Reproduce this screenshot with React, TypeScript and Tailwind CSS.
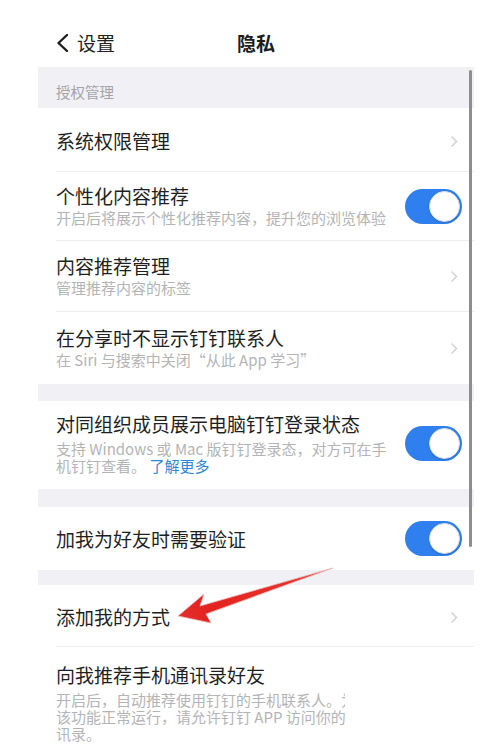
import type { ReactNode } from 'react'

const font = { fontFamily: '"Noto Sans CJK SC", "Noto Sans", sans-serif' }

function Toggle() {
  return (
    <div className="w-[57px] h-[35px] rounded-full bg-[#2f80ee] flex items-center justify-end pr-[2px] shrink-0">
      <div className="w-[31px] h-[31px] rounded-full bg-white border border-[#d6dbe3] shadow-sm" />
    </div>
  )
}

function Chevron() {
  return (
    <svg width="8" height="13" viewBox="0 0 8 13" className="shrink-0">
      <path d="M1.5 1.5 L6.5 6.5 L1.5 11.5" fill="none" stroke="#cfcfd3" strokeWidth="1.4" />
    </svg>
  )
}

interface RowProps {
  title: string
  sub?: ReactNode
  right: 'toggle' | 'chevron'
  height: string
  divider?: boolean
}

function Row({ title, sub, right, height, divider }: RowProps) {
  return (
    <div className="pl-[18px]">
      <div
        className={`flex items-center justify-between ${height} ${
          divider ? 'border-b border-[#ededef]' : ''
        } ${right === 'toggle' ? 'pr-[12px]' : 'pr-[16px]'}`}
      >
        <div className="flex flex-col">
          <div className="text-[19px] leading-[24px] text-[#1f1f1f]">{title}</div>
          {sub}
        </div>
        {right === 'toggle' ? <Toggle /> : <Chevron />}
      </div>
    </div>
  )
}

function Sub({ children }: { children: ReactNode }) {
  return <div className="text-[15px] leading-[20px] text-[#b4b4b6]">{children}</div>
}

export default function App() {
  return (
    <div className="relative w-[497px] h-[746px] bg-white overflow-hidden" style={font}>
      <div className="ml-[38px] w-[436px]">
        {/* header */}
        <div className="grid grid-cols-[1fr_auto_1fr] items-center h-[48px] mt-[19px]">
          <div className="flex items-center pl-[17px] gap-[6px]">
            <svg width="16" height="20" viewBox="0 0 16 20">
              <path d="M12 2 L3.5 10 L12 18" fill="none" stroke="#1c1c1c" strokeWidth="2.4" strokeLinecap="round" strokeLinejoin="round" />
            </svg>
            <span className="text-[19px] text-[#222222]">设置</span>
          </div>
          <div className="text-[19px] font-semibold text-[#1c1c1c]">隐私</div>
          <div />
        </div>

        {/* section header */}
        <div className="h-[41px] bg-[#f1f1f5] pl-[18px] pt-[15px] text-[14.5px] leading-[20px] text-[#a3a3a8]">
          授权管理
        </div>

        <Row title="系统权限管理" right="chevron" height="h-[64px] pt-[3px]" divider />
        <Row
          title="个性化内容推荐"
          sub={<Sub>开启后将展示个性化推荐内容，提升您的浏览体验</Sub>}
          right="toggle"
          height="h-[69px]"
          divider
        />
        <Row
          title="内容推荐管理"
          sub={<Sub>管理推荐内容的标签</Sub>}
          right="chevron"
          height="h-[71px]"
          divider
        />
        <Row
          title="在分享时不显示钉钉联系人"
          sub={<Sub>在 Siri 与搜索中关闭“从此 App 学习”</Sub>}
          right="chevron"
          height="h-[72px]"
        />

        <div className="h-[17px] bg-[#f1f1f5]" />

        <Row
          title="对同组织成员展示电脑钉钉登录状态"
          sub={
            <div className="text-[15px] leading-[17px] text-[#b4b4b6] mt-[4px]">
              <div className="whitespace-nowrap">支持 Windows 或 Mac 版钉钉登录态，对方可在手</div>
              <div className="whitespace-nowrap">
                机钉钉查看。 <span className="text-[#2f86d8]">了解更多</span>
              </div>
            </div>
          }
          right="toggle"
          height="h-[88px] pb-[4px]"
        />

        <div className="h-[18px] bg-[#f1f1f5]" />

        <Row title="加我为好友时需要验证" right="toggle" height="h-[63px]" />

        <div className="h-[15px] bg-[#f1f1f5]" />

        <Row title="添加我的方式" right="chevron" height="h-[62px] pt-[3px]" divider />

        <div className="pl-[18px] pt-[16px]">
          <div className="text-[19px] leading-[24px] text-[#1f1f1f]">向我推荐手机通讯录好友</div>
          <div className="w-[289px] overflow-hidden whitespace-nowrap text-[15px] leading-[17px] text-[#b4b4b6] mt-[4px]">
            <div>开启后，自动推荐使用钉钉的手机联系人。为保证</div>
            <div>该功能正常运行，请允许钉钉 APP 访问你的通</div>
            <div>讯录。</div>
          </div>
        </div>
      </div>

      {/* scroll indicator */}
      <div className="absolute left-[469px] top-[70px] w-[3px] h-[477px] rounded-full bg-[#8e8e92]" />

      {/* red annotation arrow */}
      <svg className="absolute left-0 top-0 pointer-events-none" width="497" height="746" viewBox="0 0 497 746">
        <defs>
          <linearGradient id="arrowShade" x1="178" y1="616" x2="333" y2="568" gradientUnits="userSpaceOnUse">
            <stop offset="0" stopColor="#e3302d" />
            <stop offset="0.2" stopColor="#e2231f" />
            <stop offset="1" stopColor="#ea3b34" />
          </linearGradient>
        </defs>
        <polygon
          points="178,616 204,594 200,606 333,568 206,614 211,623"
          fill="url(#arrowShade)"
          stroke="#f0b8b8"
          strokeWidth="0.8"
          strokeLinejoin="round"
        />
      </svg>
    </div>
  )
}
